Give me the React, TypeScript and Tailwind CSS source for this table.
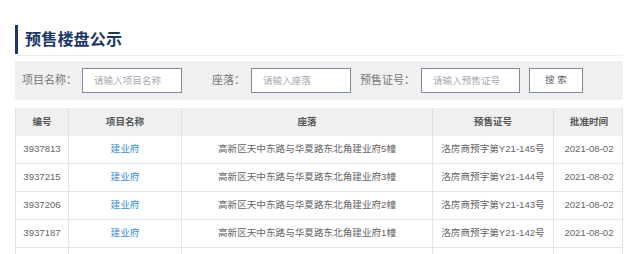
import React from 'react'

const rows = [
  { id: '3937813', name: '建业府', addr: '高新区天中东路与华夏路东北角建业府5幢', cert: '洛房商预字第Y21-145号', date: '2021-08-02' },
  { id: '3937215', name: '建业府', addr: '高新区天中东路与华夏路东北角建业府3幢', cert: '洛房商预字第Y21-144号', date: '2021-08-02' },
  { id: '3937206', name: '建业府', addr: '高新区天中东路与华夏路东北角建业府2幢', cert: '洛房商预字第Y21-143号', date: '2021-08-02' },
  { id: '3937187', name: '建业府', addr: '高新区天中东路与华夏路东北角建业府1幢', cert: '洛房商预字第Y21-142号', date: '2021-08-02' },
]

const cols = 'grid grid-cols-[52px_113px_251px_121px_71px]'

export default function App() {
  return (
    <div
      className="w-[640px] h-[254px] overflow-hidden bg-white pl-[15px]"
      style={{ fontFamily: '"Liberation Sans", "Noto Sans CJK SC", sans-serif' }}
    >
      <div className="w-[608px] pt-[25px]">
        {/* title */}
        <div className="h-[31px] border-b border-[#ececec]">
          <div className="flex items-center h-[29px]">
            <div className="w-[3px] h-full bg-[#1b3768]" />
            <h1 className="ml-[7px] text-[16px] font-bold text-[#1b3768] leading-none tracking-[0.2px]">
              预售楼盘公示
            </h1>
          </div>
        </div>

        {/* search */}
        <div className="mt-[5px] h-[39px] bg-[#f0f0f0] flex items-center pl-[7px] text-[11px] text-[#777]">
          <span>项目名称：</span>
          <input
            className="ml-[5px] w-[100px] h-[25px] border border-[#7d8aa0] bg-white px-[11px] text-[9.6px] outline-none placeholder-[#aaa]"
            placeholder="请输入项目名称"
          />
          <span className="ml-[30px]">座落：</span>
          <input
            className="ml-[6px] w-[100px] h-[25px] border border-[#7d8aa0] bg-white px-[11px] text-[9.6px] outline-none placeholder-[#aaa]"
            placeholder="请输入座落"
          />
          <span className="ml-[9px]">预售证号：</span>
          <input
            className="ml-[6px] w-[99px] h-[25px] border border-[#7d8aa0] bg-white px-[11px] text-[9.6px] outline-none placeholder-[#aaa]"
            placeholder="请输入预售证号"
          />
          <button className="ml-[9px] w-[54px] h-[25px] border border-[#7d8aa0] bg-white text-[9.6px] text-[#666]">
            搜 索
          </button>
        </div>

        {/* table */}
        <div className="mt-[8px] border-l border-r border-[#e3e3e3] text-[9.6px]">
          <div className={`${cols} h-[28px] bg-[#f0f0f0] font-bold text-[#555]`}>
            <div className="flex items-center justify-center">编号</div>
            <div className="flex items-center justify-center border-l border-[#e0e0e0]">项目名称</div>
            <div className="flex items-center justify-center border-l border-[#e0e0e0]">座落</div>
            <div className="flex items-center justify-center border-l border-[#e0e0e0]">预售证号</div>
            <div className="flex items-center justify-center border-l border-[#e0e0e0]">批准时间</div>
          </div>
          {rows.map((r) => (
            <div key={r.id} className={`${cols} h-[28px] border-b border-[#e6e6e6] text-[#666]`}>
              <div className="flex items-center justify-center">{r.id}</div>
              <div className="flex items-center justify-center border-l border-[#e6e6e6]">
                <a href="#" className="text-[#3c8fd8]">{r.name}</a>
              </div>
              <div className="flex items-center justify-center border-l border-[#e6e6e6]">{r.addr}</div>
              <div className="flex items-center justify-center border-l border-[#e6e6e6]">{r.cert}</div>
              <div className="flex items-center justify-center border-l border-[#e6e6e6]">{r.date}</div>
            </div>
          ))}
          {/* next row, cut off by the window */}
          <div className={`${cols} h-[28px]`}>
            <div />
            <div className="border-l border-[#e6e6e6]" />
            <div className="border-l border-[#e6e6e6]" />
            <div className="border-l border-[#e6e6e6]" />
            <div className="border-l border-[#e6e6e6]" />
          </div>
        </div>
      </div>
    </div>
  )
}
